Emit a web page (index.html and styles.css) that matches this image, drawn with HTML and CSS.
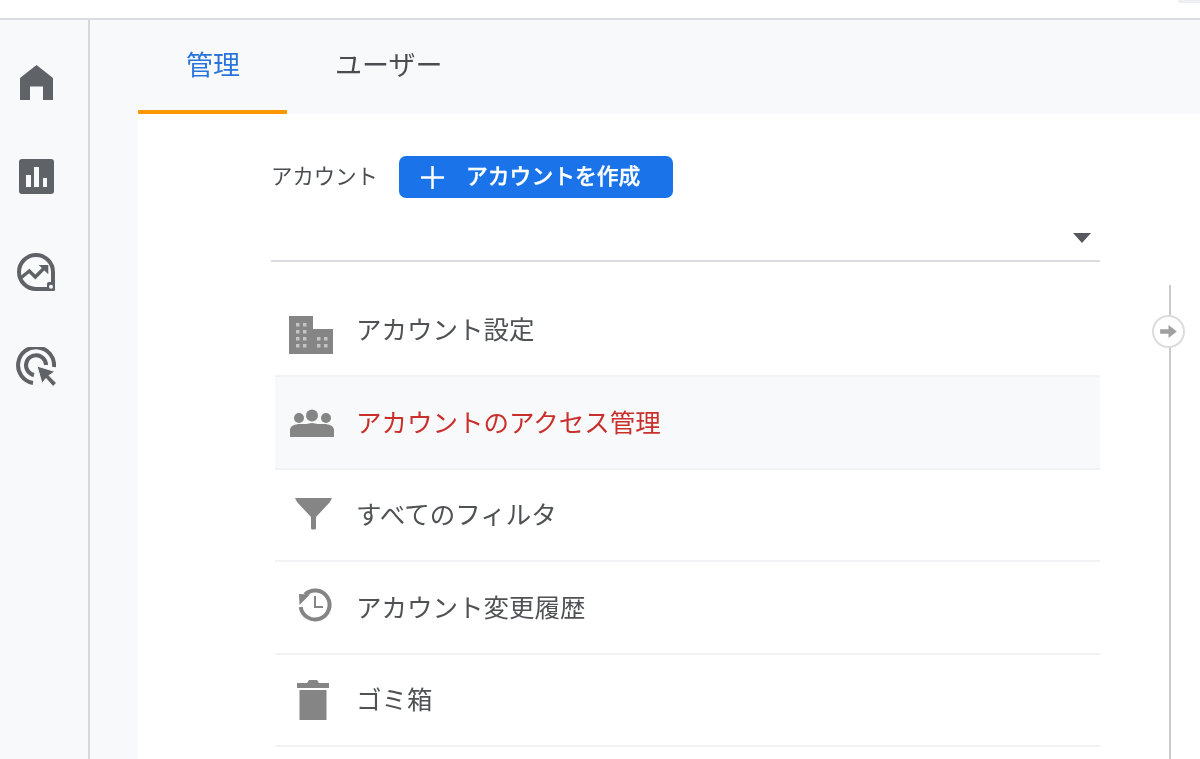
FILE: index.html
```html
<!DOCTYPE html>
<html lang="ja">
<head>
<meta charset="utf-8">
<title>管理</title>
<link rel="stylesheet" href="styles.css">
</head>
<body>
<header class="topbar"><span class="topbar-pill"></span></header>
<div class="shell">
  <nav class="rail">
    <a class="rail-item"><svg class="rail-icon" viewBox="15 62 40 40"><path d="M35.500 65 52 78v22H42V86.500H29V100H19V78z"/></svg></a>
    <a class="rail-item"><svg class="rail-icon" viewBox="15 157 40 40"><path fill-rule="evenodd" d="M21 159h29a3 3 0 0 1 3 3v29a3 3 0 0 1-3 3H21a3 3 0 0 1-3-3v-29a3 3 0 0 1 3-3zm4 16v12h5v-12zm8-8v20h5v-20zm9 11v9h4v-9z"/></svg></a>
    <a class="rail-item"><svg class="rail-icon" viewBox="15 251 40 40"><path class="stroke" stroke-width="4" d="M50 288H35a17 17 0 1 1 17-17v17"/><rect x="46" y="281" width="8" height="9" rx="1.500"/><circle class="dot" cx="50" cy="285.700" r="2"/><path class="stroke" stroke-width="3.400" d="m20 276.700 8.300-6.700 6 6 8.700-8.700"/><path d="M37.700 264h9.600v9.300z"/></svg></a>
    <a class="rail-item"><svg class="rail-icon" viewBox="15 347 40 40"><path class="stroke" stroke-width="4" d="M32 383a18 18 0 1 1 21-16"/><path class="stroke" stroke-width="4" d="M33 375a10 10 0 1 1 12-10"/><path class="cursor" d="m36 366 18 5.500-6 4 7.500 7.500-3.500 3.500-7-8-4 5z"/></svg></a>
  </nav>
  <main class="main">
    <div class="tabs">
      <a class="tab tab-active">管理</a>
      <a class="tab">ユーザー</a>
    </div>
    <section class="panel">
      <div class="column">
        <div class="account-head">
          <span class="account-label">アカウント</span>
          <button class="create-btn" type="button">
            <svg class="plus" viewBox="0 0 23 23"><path d="M11.500 0v23M0 11.500h23"/></svg>
            <span class="create-text">アカウントを作成</span>
          </button>
        </div>
        <div class="select"><span class="select-arrow"></span></div>
        <ul class="menu">
          <li class="row">
            <svg class="row-icon" viewBox="287 305 50 50"><path d="M289 316h24v13h20v25h-44z"/><g class="win"><rect x="296" y="323" width="3.500" height="3.500"/><rect x="303" y="323" width="3.500" height="3.500"/><rect x="296" y="330" width="3.500" height="3.500"/><rect x="303" y="330" width="3.500" height="3.500"/><rect x="296" y="337" width="3.500" height="3.500"/><rect x="303" y="337" width="3.500" height="3.500"/><rect x="296" y="344" width="3.500" height="3.500"/><rect x="303" y="344" width="3.500" height="3.500"/><rect x="317" y="337" width="3.500" height="3.500"/><rect x="324" y="337" width="3.500" height="3.500"/><rect x="317" y="344" width="3.500" height="3.500"/><rect x="324" y="344" width="3.500" height="3.500"/></g></svg>
            <span class="row-text">アカウント設定</span>
          </li>
          <li class="row row-active">
            <svg class="row-icon" viewBox="287 398 50 50"><circle cx="312" cy="416.500" r="6"/><circle cx="299" cy="419" r="5"/><circle cx="326" cy="419" r="5"/><path d="M290 438v-7c0-4 5-6 10-6 5 0 8 0 12-1 4 1 7 1 12 1 5 0 10 2 10 6v7z"/></svg>
            <span class="row-text">アカウントのアクセス管理</span>
          </li>
          <li class="row">
            <svg class="row-icon" viewBox="287 490 50 50"><path d="M295 498h37l-2 4-14 15v11a1.500 1.500 0 0 1-1.500 1.500h-2A1.500 1.500 0 0 1 311 528v-11l-14-15z"/></svg>
            <span class="row-text">すべてのフィルタ</span>
          </li>
          <li class="row">
            <svg class="row-icon" viewBox="287 583 50 50"><path class="stroke" stroke-width="4" fill="none" d="M305 595.500a14.500 14.500 0 1 1-4.300 12.500"/><path d="m299 595 11 .5-10.500 10.500z"/><path class="stroke" stroke-width="2" d="M315 597v11h8"/></svg>
            <span class="row-text">アカウント変更履歴</span>
          </li>
          <li class="row">
            <svg class="row-icon" viewBox="287 675 50 50"><path d="M309 680h8l2 3h10v5h-32v-5h10zM299.500 690h27v30h-27z"/></svg>
            <span class="row-text">ゴミ箱</span>
          </li>
        </ul>
      </div>
      <div class="timeline">
        <span class="timeline-node"><svg viewBox="0 0 18 14"><path d="M0 4.500h9V0l9 7-9 7V9.500H0z"/></svg></span>
      </div>
    </section>
  </main>
</div>
</body>
</html>
```
FILE: styles.css
```css
* { box-sizing: border-box; }
html, body { margin: 0; height: 100%; overflow: hidden; }
body {
  display: flex;
  flex-direction: column;
  background: #fff;
  font-family: "Noto Sans CJK JP", "Noto Sans", sans-serif;
  color: #4a4d50;
}
.topbar {
  height: 20px;
  flex: none;
  background: #fff;
  border-bottom: 2px solid #dadce0;
  display: flex;
  justify-content: flex-end;
  align-items: flex-start;
}
.topbar-pill {
  width: 22px;
  height: 3px;
  background: #eceef0;
  border-bottom-left-radius: 8px;
}
.shell { flex: 1; display: flex; min-height: 0; filter: blur(0.6px); }
.rail {
  width: 90px;
  flex: none;
  background: #f8f9fa;
  border-right: 2px solid #d5d7da;
  padding-top: 14.500px;
  display: flex;
  flex-direction: column;
  align-items: flex-start;
}
.rail-item { height: 95px; width: 71px; display: flex; align-items: center; justify-content: center; }
.rail-icon { width: 40px; height: 40px; fill: #5f6368; }
.stroke { fill: none; stroke: #5f6368; }
.dot { fill: #f8f9fa; }
.cursor { stroke: #f8f9fa; stroke-width: 1; }
.main {
  flex: 1;
  background: #f8f9fa;
  padding-left: 48px;
  display: flex;
  flex-direction: column;
  min-width: 0;
}
.tabs { height: 94px; flex: none; display: flex; }
.tab {
  padding: 0 47px 4px 48px;
  display: flex;
  align-items: center;
  font-size: 27px;
  color: #4a4d50;
  border-bottom: 4px solid transparent;
}
.tab-active { color: #2a75dc; border-bottom-color: #ff9800; }
.panel {
  flex: 1;
  background: #fff;
  padding: 42px 0 0 133px;
  display: flex;
  min-height: 0;
}
.column { width: 829px; flex: none; }
.account-head { height: 42px; display: flex; align-items: center; }
.account-label { font-size: 21.400px; width: 128px; flex: none; position: relative; top: -3px; }
.create-btn {
  width: 274px;
  height: 42px;
  border: 0;
  border-radius: 7px;
  background: #1a73e8;
  color: #fff;
  font: 500 21.800px "Noto Sans CJK JP", sans-serif;
  -webkit-text-stroke: 0.3px #fff;
  padding: 0 0 0 22px;
  display: flex;
  align-items: center;
  gap: 22px;
}
.create-text { position: relative; top: -3px; }
.plus { width: 23px; height: 23px; fill: none; stroke: #fff; stroke-width: 2.500; }
.select {
  height: 64px;
  border-bottom: 2px solid #dadce0;
  display: flex;
  justify-content: flex-end;
  padding: 35px 9px 0 0;
}
.select-arrow {
  width: 0;
  height: 0;
  border-left: 9.500px solid transparent;
  border-right: 9.500px solid transparent;
  border-top: 10px solid #55585c;
}
.menu { list-style: none; margin: 22.500px 0 0 4px; padding: 0; }
.row {
  height: 92.500px;
  border-bottom: 2px solid #f1f2f3;
  display: flex;
  align-items: center;
  font-size: 25.500px;
  color: #4f5154;
  padding-left: 12px;
  gap: 19px;
}
.row-text { position: relative; top: -2px; }
.row-active { background: #f8f9fa; color: #c9302c; }
.row-icon { width: 50px; height: 50px; flex: none; fill: #858585; }
.row-icon .stroke { stroke: #858585; }
.win { fill: #c4c4c4; }
.timeline {
  position: relative;
  width: 2px;
  flex: none;
  margin: 129px 0 0 69px;
  background: #c9cacb;
}
.timeline-node {
  position: absolute;
  left: -17px;
  top: 30px;
  width: 33px;
  height: 33px;
  border-radius: 50%;
  border: 2px solid #dcdcdc;
  background: #fff;
  display: flex;
  align-items: center;
  justify-content: center;
}
.timeline-node svg { width: 17px; height: 13px; fill: #a0a0a0; }
```
